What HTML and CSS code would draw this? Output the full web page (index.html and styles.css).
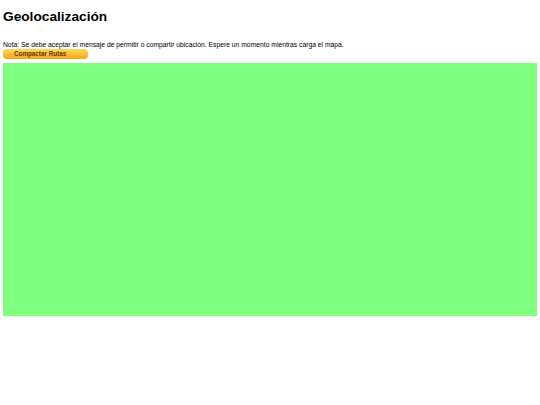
FILE: index.html
```html
<!DOCTYPE html>
<html lang="es">
<head>
<meta charset="utf-8">
<title>Geolocalización</title>
<link rel="stylesheet" href="styles.css">
</head>
<body>
<h1 class="title">Geolocalización</h1>
<p class="note">Nota: Se debe aceptar el mensaje de permitir o compartir ubicación. Espere un momento mientras carga el mapa.</p>
<button class="btn">Compactar Rutas</button>
<div class="map"></div>
</body>
</html>
```
FILE: styles.css
```css
html, body { margin: 0; padding: 0; background: #fff; }
body {
  padding: 3px;
  font-family: "Liberation Sans", Arial, sans-serif;
  color: #000;
}
.title {
  font-size: 13.7px;
  font-weight: bold;
  margin: 6px 0 0 0;
  line-height: 16px;
}
.note {
  font-size: 6.75px;
  line-height: 9px;
  margin: 15px 0 0 0;
}
.btn {
  display: block;
  width: 85px;
  height: 10px;
  margin: 0;
  padding: 0 0 0 11px;
  text-align: left;
  border: 0;
  border-radius: 4px;
  background: linear-gradient(#ffd75a, #f9a51a);
  font-family: "Liberation Sans", Arial, sans-serif;
  font-size: 6.3px;
  font-weight: bold;
  color: #5a3a10;
  line-height: 10px;
}
.map {
  margin-top: 4px;
  width: 534px;
  height: 253px;
  background: #80ff80;
}
```
